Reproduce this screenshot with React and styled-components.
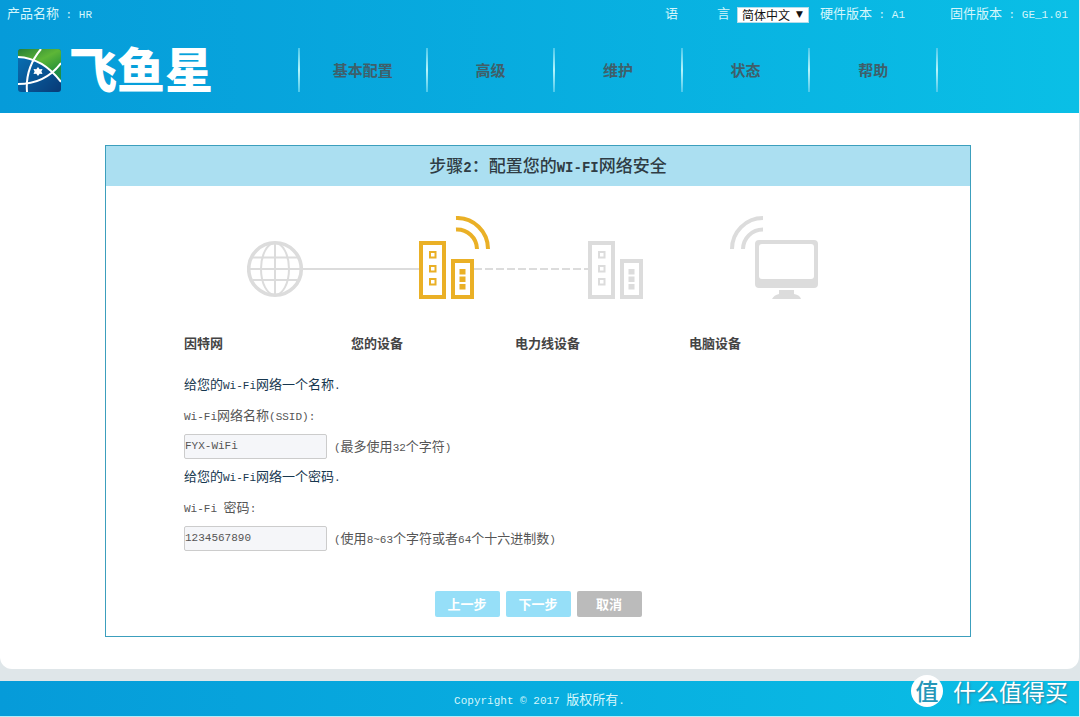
import React, { useState } from "react";
import styled, { createGlobalStyle } from "styled-components";

const GlobalStyle = createGlobalStyle`
  * {
    box-sizing: border-box;
  }
  body {
    margin: 0;
    background: #fff;
    color: #555;
    font-family: "Noto Sans CJK SC", sans-serif;
    font-size: 13px;
    line-height: 18px;
  }
`;

const Page = styled.div`
  display: flex;
  flex-direction: column;
  min-height: 100vh;
  background: #dfe6e9;
`;

const Header = styled.header`
  height: 113px;
  margin-right: 1px;
  background: linear-gradient(to right, #069bd9, #0abfe6);
`;

const TopBar = styled.div`
  display: flex;
  align-items: center;
  justify-content: space-between;
  height: 28px;
  padding: 0 11px 3px 7px;
  color: #d4f6fb;
`;

const TopInfo = styled.div`
  display: flex;
  align-items: center;
`;

const LangLabel = styled.label`
  display: flex;
  justify-content: space-between;
  width: 65px;
  margin-right: 7px;
`;

const SelectBox = styled.div`
  position: relative;
  display: flex;
  margin: 4px 11px 0 0;

  &::after {
    content: "▼";
    position: absolute;
    right: 6px;
    top: 0;
    color: #111;
    font: 9px/15px "DejaVu Sans", sans-serif;
    pointer-events: none;
  }
`;

const LangSelect = styled.select`
  appearance: none;
  width: 72px;
  height: 16px;
  padding: 0 0 0 4px;
  border: 1px solid #b4dcea;
  border-radius: 0;
  background: #fff;
  color: #111;
  font: 12px/14px "Noto Sans CJK SC", sans-serif;
`;

const Version = styled.span`
  min-width: ${props => (props.$wide ? "130px" : "0")};
  white-space: pre;
`;

// half-width latin text that sits between the chinese characters
const Latin = styled.span`
  font-family: "Liberation Mono", monospace;
  font-size: ${props => (props.$large ? "14px" : "11px")};
  font-weight: ${props => (props.$large ? "700" : "400")};
  line-height: 1;
  white-space: pre;
`;

const NavRow = styled.div`
  display: flex;
  align-items: center;
  height: 84px;
`;

const Logo = styled.a`
  display: flex;
  align-items: center;
  gap: 8px;
  width: 298px;
  padding-left: 18px;
  text-decoration: none;
`;

const LogoText = styled.span`
  padding-bottom: 6px;
  color: #fff;
  font-size: 48px;
  font-weight: 900;
  line-height: 44px;
`;

const Nav = styled.nav`
  display: flex;
  width: 640px;
`;

const Divider = styled.span`
  width: 2px;
  height: 44px;
  background: linear-gradient(to bottom, #4cc8ea, #b5f4fb 50%, #4cc8ea);
`;

const NavLink = styled.a`
  flex: 1;
  color: #3f5f6a;
  font-size: 15px;
  font-weight: 700;
  line-height: 43px;
  text-align: center;
  text-decoration: none;
`;

const NavItem = styled.div`
  display: flex;
  flex: 1;
`;

const Main = styled.main`
  flex: 1;
  margin: 0 1px 12px 0;
  padding: 32px 3px 32px 0;
  background: #fff;
  border-radius: 0 0 12px 12px;
`;

const Panel = styled.form`
  width: 866px;
  max-width: 94%;
  margin: 0 auto;
  border: 1px solid #3c9fbd;
`;

const PanelTitle = styled.h1`
  height: 40px;
  margin: 0;
  padding-left: 20px;
  background: #abdff1;
  color: #2f3c44;
  font-size: 17px;
  font-weight: 500;
  line-height: 38px;
  text-align: center;
`;

const PanelBody = styled.div`
  padding: 30px 78px 19px;
`;

const Diagram = styled.svg`
  display: block;
  width: 573px;
  max-width: 100%;
  margin-left: 63px;
`;

const StepLabels = styled.div`
  display: grid;
  grid-template-columns: 167fr 164fr 174fr 203fr;
  margin: 34px 0 17px;
  color: #444;
  font-weight: 700;
`;

const TextRow = styled.div`
  display: block;
  height: 31px;
  color: ${props => (props.$heading ? "#17374f" : "#555")};
  line-height: 30px;
`;

const InputRow = styled.div`
  display: flex;
  align-items: center;
  gap: 7px;
  height: 30px;
`;

const TextInput = styled.input`
  width: 143px;
  height: 25px;
  padding: 0;
  border: 1px solid #ccc;
  border-radius: 2px;
  background: #f5f6f9;
  color: #555;
  font: 11px "Liberation Mono", monospace;
`;

const Buttons = styled.div`
  display: flex;
  justify-content: center;
  gap: 6px;
  margin-top: 38px;
`;

const Button = styled.button`
  width: 65px;
  height: 26px;
  padding: 0 0 2px;
  border: 0;
  border-radius: 2px;
  background: ${props => (props.$gray ? "#bbb" : "#96dff8")};
  color: #fff;
  font: 700 13px "Noto Sans CJK SC", sans-serif;
`;

const Footer = styled.footer`
  position: relative;
  height: 36px;
  margin-right: 1px;
  border-bottom: 1px solid #b9ecf7;
  background: linear-gradient(to right, #069bd9, #0abfe6);
  color: #d4f6fb;
  line-height: 36px;
  text-align: center;
`;

const Watermark = styled.div`
  position: absolute;
  right: 11px;
  bottom: 9px;
  display: flex;
  align-items: center;
  gap: 10px;
  color: #fff;
  font-size: 23px;
  line-height: 32px;
  text-shadow: 1px 1px 2px #3a7f98;
`;

const Badge = styled.span`
  width: 32px;
  height: 32px;
  border-radius: 50%;
  background: #fff;
  color: #2596b8;
  font-size: 23px;
  font-weight: 500;
  line-height: 31px;
  text-align: center;
  text-shadow: none;
`;

const navItems = ["基本配置", "高级", "维护", "状态", "帮助"];
const steps = ["因特网", "您的设备", "电力线设备", "电脑设备"];

const LogoMark = () => (
  <svg width="43" height="43" viewBox="0 0 43 43" aria-hidden="true">
    <defs>
      <linearGradient id="sea" x1="0" y1="0" x2="1" y2="1">
        <stop offset="0" stopColor="#0874b8" />
        <stop offset="1" stopColor="#083a76" />
      </linearGradient>
      <linearGradient id="leaf" x1="0" y1="0" x2="1" y2="1">
        <stop offset="0" stopColor="#277f35" />
        <stop offset="0.5" stopColor="#5db637" />
        <stop offset="1" stopColor="#1b8a38" />
      </linearGradient>
      <clipPath id="tile">
        <rect width="43" height="43" rx="3" />
      </clipPath>
    </defs>
    <g clipPath="url(#tile)">
      <rect width="43" height="43" fill="url(#sea)" />
      <path d="M0 0H43V15L34 23Q20 9 0 8Z" fill="url(#leaf)" />
      <path d="M34 23L43 15V32Z" fill="#1f8d45" />
      <g fill="none" stroke="#fff" strokeWidth="2">
        <path d="M0 8Q25 9 43 33" />
        <path d="M0 35Q27 35 43 14" />
        <path d="M23 0Q7 19 9 43" />
      </g>
      <path
        d="M20 18l1.7 2.3 2.8-.4-1.1 2.6 1.1 2.6-2.8-.3L20 27l-1.7-2.2-2.8.3 1.1-2.6-1.1-2.6 2.8.4z"
        fill="#fff"
      />
    </g>
  </svg>
);

// the tall and the short adapter that stand side by side
const Adapter = ({ x, color }) => (
  <g transform={`translate(${x} 25)`} fill="none" stroke={color}>
    <rect x="2" y="2" width="23" height="54" fill="#fff" strokeWidth="4" />
    <rect x="34" y="20" width="19" height="36" fill="#fff" strokeWidth="4" />
    {[11, 25, 38].map(y => (
      <rect key={y} x="11" y={y} width="5.5" height="5.5" strokeWidth="2" />
    ))}
    {[28, 35.5, 43].map(y => (
      <rect key={y} x="40.5" y={y} width="6" height="5.5" fill={color} stroke="none" />
    ))}
  </g>
);

const NetworkDiagram = () => (
  <Diagram viewBox="0 0 573 84" role="img" aria-label="网络连接图">
    <g fill="none" stroke="#dcdcdc">
      <path d="M56 53H174" strokeWidth="2" />
      <path d="M227 53H342" strokeWidth="2" strokeDasharray="8 3" />
      <circle cx="28" cy="53" r="26.3" strokeWidth="3.6" />
      <g strokeWidth="2">
        <ellipse cx="28" cy="53" rx="14" ry="26" />
        <path d="M28 27V79M2 53H54M6 41.5H50M6 64H50" />
      </g>
      <g strokeWidth="4">
        <path d="M485 33A31 31 0 0 1 516 2" />
        <path d="M496 33A20 20 0 0 1 516 13.5" />
      </g>
    </g>
    <Adapter x={172} color="#eab026" />
    <Adapter x={341} color="#dcdcdc" />
    <g fill="none" stroke="#eab026" strokeWidth="4">
      <path d="M209 2A31 31 0 0 1 241 33" />
      <path d="M209 13.5A20 20 0 0 1 230 33" />
    </g>
    <path
      d="M512 24H567Q571 24 571 28V68Q571 72 567 72H512Q508 72 508 68V28Q508 24 512 24ZM515 28Q512 28 512 31V60Q512 63 515 63H564Q567 63 567 60V31Q567 28 564 28Z"
      fill="#dcdcdc"
      fillRule="evenodd"
    />
    <path d="M532 74H547V78Q553 79 554 83H525Q527 79 532 78Z" fill="#dcdcdc" />
  </Diagram>
);

const App = () => {
  const [ssid, setSsid] = useState("FYX-WiFi");
  const [password, setPassword] = useState("1234567890");

  return (
    <Page>
      <GlobalStyle />
      <Header>
        <TopBar>
          <Version>
            产品名称<Latin> : HR</Latin>
          </Version>
          <TopInfo>
            <LangLabel htmlFor="lang">
              <span>语</span>
              <span>言</span>
            </LangLabel>
            <SelectBox>
              <LangSelect id="lang" defaultValue="zh">
                <option value="zh">简体中文</option>
                <option value="en">English</option>
              </LangSelect>
            </SelectBox>
            <Version $wide>
              硬件版本<Latin> : A1</Latin>
            </Version>
            <Version>
              固件版本<Latin> : GE_1.01</Latin>
            </Version>
          </TopInfo>
        </TopBar>
        <NavRow>
          <Logo href="#">
            <LogoMark />
            <LogoText>飞鱼星</LogoText>
          </Logo>
          <Nav>
            <Divider />
            {navItems.map(item => (
              <NavItem key={item}>
                <NavLink href="#">{item}</NavLink>
                <Divider />
              </NavItem>
            ))}
          </Nav>
        </NavRow>
      </Header>
      <Main>
        <Panel onSubmit={e => e.preventDefault()}>
          <PanelTitle>
            步骤<Latin $large>2</Latin>：配置您的<Latin $large>WI-FI</Latin>
            网络安全
          </PanelTitle>
          <PanelBody>
            <NetworkDiagram />
            <StepLabels>
              {steps.map(step => (
                <span key={step}>{step}</span>
              ))}
            </StepLabels>
            <TextRow $heading>
              给您的<Latin>Wi-Fi</Latin>网络一个名称<Latin>.</Latin>
            </TextRow>
            <TextRow as="label" htmlFor="ssid">
              <Latin>Wi-Fi</Latin>网络名称<Latin>(SSID):</Latin>
            </TextRow>
            <InputRow>
              <TextInput
                id="ssid"
                value={ssid}
                onChange={e => setSsid(e.target.value)}
              />
              <span>
                <Latin>(</Latin>最多使用<Latin>32</Latin>个字符<Latin>)</Latin>
              </span>
            </InputRow>
            <TextRow $heading>
              给您的<Latin>Wi-Fi</Latin>网络一个密码<Latin>.</Latin>
            </TextRow>
            <TextRow as="label" htmlFor="password">
              <Latin>Wi-Fi </Latin>密码<Latin>:</Latin>
            </TextRow>
            <InputRow>
              <TextInput
                id="password"
                value={password}
                onChange={e => setPassword(e.target.value)}
              />
              <span>
                <Latin>(</Latin>使用<Latin>8~63</Latin>个字符或者
                <Latin>64</Latin>个十六进制数<Latin>)</Latin>
              </span>
            </InputRow>
            <Buttons>
              <Button type="button">上一步</Button>
              <Button type="submit">下一步</Button>
              <Button type="button" $gray>
                取消
              </Button>
            </Buttons>
          </PanelBody>
        </Panel>
      </Main>
      <Footer>
        <Latin>Copyright © 2017 </Latin>版权所有<Latin>.</Latin>
        <Watermark>
          <Badge>值</Badge>
          <span>什么值得买</span>
        </Watermark>
      </Footer>
    </Page>
  );
};

export default App;
